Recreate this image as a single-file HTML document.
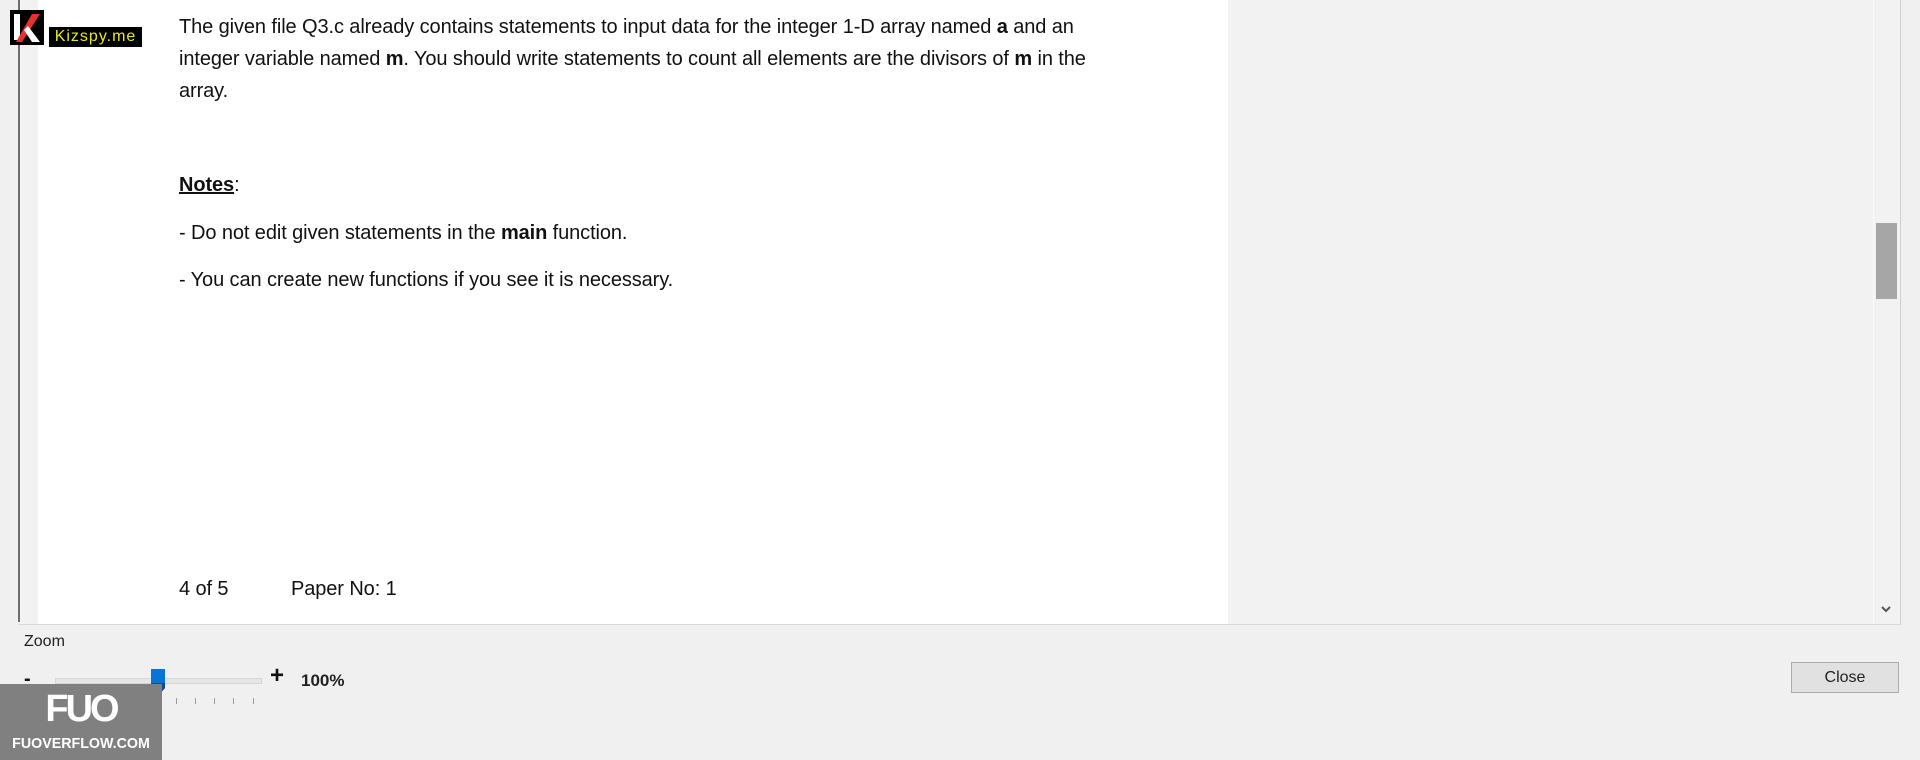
<!DOCTYPE html>
<html><head><meta charset="utf-8"><style>
body{margin:0;width:1920px;height:760px;background:#f0f0f0;position:relative;overflow:hidden;font-family:"Liberation Sans",sans-serif}
.a{position:absolute}
.txt{position:absolute;left:179px;font-size:20px;color:#111;white-space:nowrap;line-height:24px;letter-spacing:-0.1px}
.tk{position:absolute;top:698px;width:1px;height:6px;background:#999}
</style></head><body>
<div class="a" style="left:18px;top:0;width:2px;height:622px;background:#6e6e6e"></div>
<div class="a" style="left:20px;top:0;width:18px;height:624px;background:#f2f2f2"></div>
<div class="a" style="left:38px;top:0;width:1190px;height:624px;background:#fff"></div>
<div class="a" style="left:1228px;top:0;width:645px;height:624px;background:#f2f2f2"></div>
<div class="a" style="left:18px;top:624px;width:1883px;height:1px;background:#d8d8d8"></div>
<div class="a" style="left:1873px;top:0;width:26px;height:624px;background:#f2f2f2;border-left:1px solid #fafafa"></div>
<div class="a" style="left:1900px;top:0;width:1px;height:625px;background:#d0d0d0"></div>
<div class="a" style="left:1876px;top:223px;width:21px;height:76px;background:#a6a6a6"></div>
<svg class="a" style="left:1880px;top:604px" width="12" height="10"><path d="M2 3 L6 7 L10 3" stroke="#555" stroke-width="2" fill="none"/></svg>

<div class="txt" style="top:15px">The given file Q3.c already contains statements to input data for the integer 1-D array named <b>a</b> and an</div>
<div class="txt" style="top:47px">integer variable named <b>m</b>. You should write statements to count all elements are the divisors of <b>m</b> in the</div>
<div class="txt" style="top:79px">array.</div>
<div class="txt" style="top:173px"><b><u>Notes</u></b>:</div>
<div class="txt" style="top:221px">- Do not edit given statements in the <b>main</b> function.</div>
<div class="txt" style="top:268px">- You can create new functions if you see it is necessary.</div>
<div class="txt" style="top:577px">4 of 5</div>
<div class="txt" style="top:577px;left:291px">Paper No: 1</div>

<div class="a" style="left:10px;top:10px;width:34px;height:35px;background:#000"></div>
<svg class="a" style="left:10px;top:10px" width="34" height="35"><path d="M4 4 L10 4 L10 30 L4 30Z" fill="#fff"/><path d="M22 4 L30 4 L12 32 L6 32Z" fill="#e53030"/><path d="M14 20 L22 32 L30 32 L18 16Z" fill="#fff"/></svg>
<div class="a" style="left:49px;top:27px;width:93px;height:20px;background:#000;color:#e8e820;font-size:16px;line-height:20px;text-align:center;letter-spacing:1px">Kizspy.me</div>

<div class="a" style="left:24px;top:633px;font-size:16px;color:#222">Zoom</div>
<div class="a" style="left:24px;top:668px;font-size:20px;font-weight:bold;color:#111">-</div>
<div class="a" style="left:55px;top:678px;width:205px;height:4px;background:#e6e6e6;border:1px solid #d6d6d6"></div>
<div class="tk" style="left:120px"></div><div class="tk" style="left:139px"></div><div class="tk" style="left:176px"></div><div class="tk" style="left:195px"></div><div class="tk" style="left:214px"></div><div class="tk" style="left:233px"></div><div class="tk" style="left:253px"></div>
<svg class="a" style="left:150px;top:668px" width="16" height="30"><path d="M1 1 H15 V20 L8 28 L1 20Z" fill="#0a74d6"/><path d="M1 15 H15 V20 L8 28 L1 20Z" fill="#0a4f94"/></svg>
<div class="a" style="left:270px;top:662px;font-size:24px;font-weight:bold;color:#111">+</div>
<div class="a" style="left:301px;top:671px;font-size:17px;font-weight:bold;color:#222">100%</div>
<div class="a" style="left:1791px;top:662px;width:106px;height:29px;background:#e1e1e1;border:1px solid #adadad;font-size:16px;line-height:29px;text-align:center;color:#222">Close</div>

<div class="a" style="left:0;top:684px;width:162px;height:76px;background:#808080"></div>
<div class="a" style="left:0;top:688px;width:162px;text-align:center;color:#fff;font-size:38px;font-weight:bold;letter-spacing:-3px">FUO</div>
<div class="a" style="left:0;top:735px;width:162px;text-align:center;color:#fff;font-size:15px;font-weight:bold;transform:scaleX(0.95)">FUOVERFLOW.COM</div>
</body></html>
